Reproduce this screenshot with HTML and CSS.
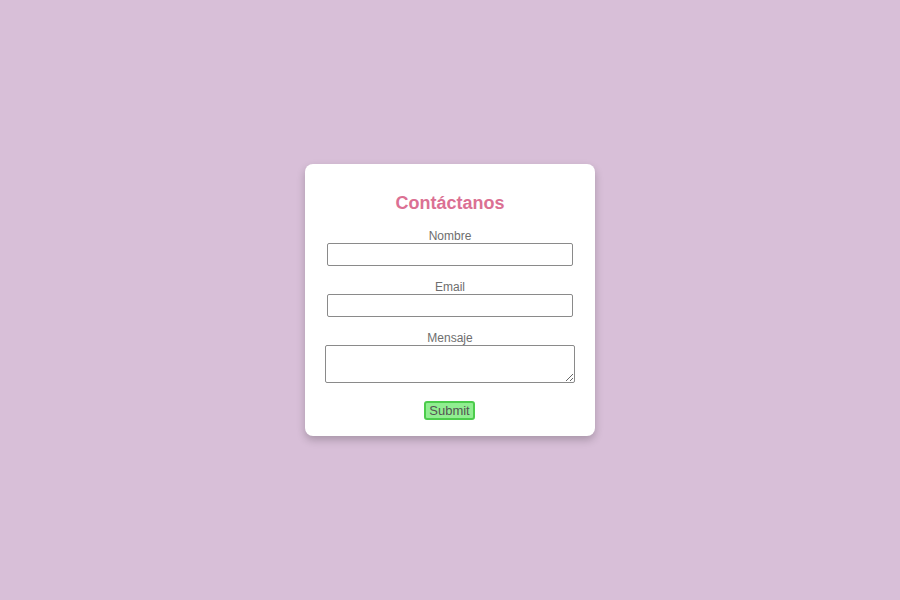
FILE: index.html
```html
<!DOCTYPE html>
<html lang="es">
<head>
<meta charset="utf-8">
<title>Contáctanos</title>
<link rel="stylesheet" href="styles.css">
</head>
<body>
  <form class="card">
    <h2 class="title">Contáctanos</h2>
    <div class="field">
      <label class="label" for="nombre">Nombre</label>
      <input class="input" id="nombre" type="text">
    </div>
    <div class="field">
      <label class="label" for="email">Email</label>
      <input class="input" id="email" type="email">
    </div>
    <div class="field">
      <label class="label" for="mensaje">Mensaje</label>
      <textarea class="textarea" id="mensaje"></textarea>
    </div>
    <div class="actions">
      <button class="submit" type="button">Submit</button>
    </div>
  </form>
</body>
</html>
```

FILE: styles.css
```css
html, body {
  margin: 0;
  height: 100%;
}
body {
  background: #d8bfd8;
  display: flex;
  align-items: center;
  justify-content: center;
  font-family: "Liberation Sans", Arial, sans-serif;
}
.card {
  box-sizing: border-box;
  width: 290px;
  background: #fff;
  border-radius: 8px;
  box-shadow: 0 4px 8px rgba(0, 0, 0, 0.22);
  padding: 20px 20px 16px;
  display: flex;
  flex-direction: column;
  align-items: center;
}
.title {
  margin: 8px 0 0;
  font-size: 18px;
  line-height: 23px;
  font-weight: bold;
  color: #db7093;
  text-align: center;
}
.field {
  margin-top: 13px;
  width: 100%;
  display: flex;
  flex-direction: column;
  align-items: center;
}
.label {
  display: block;
  font-size: 12px;
  line-height: 13px;
  padding-top: 2px;
  color: #6e6e6e;
  text-align: center;
}
.input {
  box-sizing: border-box;
  width: 246px;
  height: 23px;
  margin: 0;
  border: 1px solid #8a8a8a;
  border-radius: 2px;
  padding: 1px 3px;
  font-family: inherit;
  font-size: 13px;
  background: #fff;
}
.textarea {
  box-sizing: border-box;
  width: 250px;
  height: 38px;
  margin: 0;
  border: 1px solid #8a8a8a;
  border-radius: 2px;
  padding: 2px;
  font-family: inherit;
  font-size: 13px;
  background: #fff;
}
.actions {
  margin-top: 18px;
  display: flex;
  justify-content: center;
}
.submit {
  box-sizing: border-box;
  width: 51px;
  height: 19px;
  padding: 0;
  margin: 0 1px 0 0;
  background: #90ee90;
  border: 2px solid #4ccc4c;
  border-radius: 3px;
  font-family: inherit;
  font-size: 13px;
  line-height: 15px;
  color: #555;
}
```
